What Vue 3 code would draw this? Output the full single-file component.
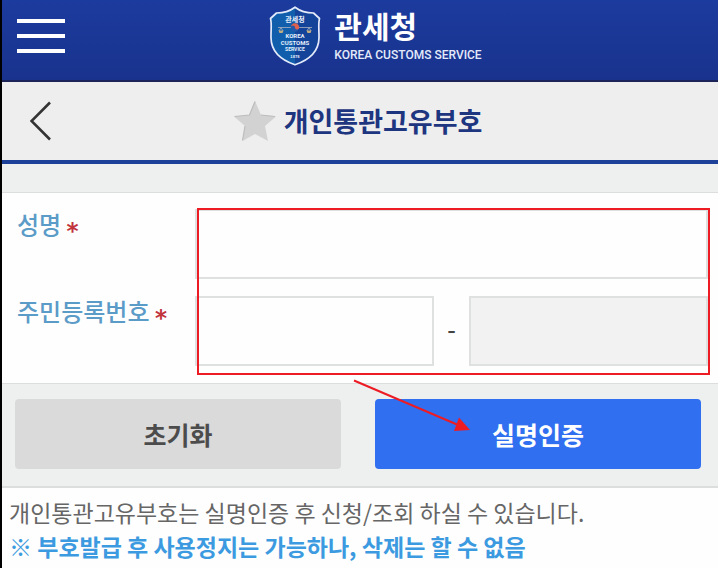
<script setup>
import { ref } from 'vue'

const name = ref('')
const idFront = ref('')
const idBack = ref('')

function reset() {
  name.value = ''
  idFront.value = ''
  idBack.value = ''
}
</script>

<template>
  <div class="page">
    <header class="top">
      <button class="menu" type="button" aria-label="메뉴">
        <span></span><span></span><span></span>
      </button>
      <a class="brand" href="#">
        <svg class="shield" viewBox="0 0 52 60" aria-hidden="true">
          <defs>
            <clipPath id="shield-clip">
              <path d="M26 1.2C21 5 15 7 7.5 7L1.5 12.5C3 18 1.8 24 2 32C2.3 46 12 54 26 58.8C40 54 49.7 46 50 32C50.2 24 49 18 50.5 12.5L44.5 7C37 7 31 5 26 1.2Z" />
            </clipPath>
          </defs>
          <g clip-path="url(#shield-clip)">
            <rect width="26" height="60" fill="#115fac" />
            <rect x="26" width="26" height="60" fill="#14439a" />
          </g>
          <path d="M26 1.2C21 5 15 7 7.5 7L1.5 12.5C3 18 1.8 24 2 32C2.3 46 12 54 26 58.8C40 54 49.7 46 50 32C50.2 24 49 18 50.5 12.5L44.5 7C37 7 31 5 26 1.2Z" fill="none" stroke="#e3ebfa" stroke-width="1.7" stroke-linejoin="round" />
          <text x="26" y="15.5" class="crest-ko">관세청</text>
          <path d="M9 21.5H43M12 21.5L10 25M12 21.5L14 25M40 21.5L38 25M40 21.5L42 25" stroke="#9aa6ba" stroke-width="0.9" fill="none" />
          <path d="M9.5 24.5H14.5L13.5 27H10.5ZM37.5 24.5H42.5L41.5 27H38.5Z" fill="#c3ae82" />
          <circle cx="26" cy="21.5" r="4.2" fill="#2358a8" />
          <path d="M21.8 21.5A4.2 4.2 0 0 1 30.2 21.5A2.1 2.1 0 0 1 26 21.5A2.1 2.1 0 0 0 21.8 21.5Z" fill="#e0604c" />
          <text x="26" y="31.5" class="crest-en">KOREA</text>
          <text x="26" y="38.5" class="crest-en">CUSTOMS</text>
          <text x="26" y="45" class="crest-en small">SERVICE</text>
          <text x="26" y="52" class="crest-year">1878</text>
        </svg>
        <span class="names">
          <span class="ko">관세청</span>
          <span class="en">KOREA CUSTOMS SERVICE</span>
        </span>
      </a>
    </header>

    <div class="titlebar">
      <button class="back" type="button" aria-label="뒤로">
        <svg viewBox="0 0 22 40" aria-hidden="true">
          <path d="M20 1.5L1.5 20L20 38.5" fill="none" stroke="#333" stroke-width="2.6" />
        </svg>
      </button>
      <h1>
        <svg class="star" viewBox="0 0 42 40" aria-hidden="true">
          <path d="M21 0L27 14L42 15.5L31 25L34 40L21 33L8.500 40L11 25L0 15.500L15.500 14Z" fill="#d2d2d2" />
          <path d="M8.500 39.500L11 25M0.500 15.500L15.500 14L21 0.500M27 14L41 15.500" fill="none" stroke="#bcbcbc" stroke-width="1.200" />
        </svg>
        <span>개인통관고유부호</span>
      </h1>
    </div>

    <form @submit.prevent>
      <div class="fields">
        <label for="name">성명 <span class="req">*</span></label>
        <input id="name" v-model="name" type="text" />
        <label for="id-front">주민등록번호 <span class="req">*</span></label>
        <div class="pair">
          <input id="id-front" v-model="idFront" type="text" />
          <span class="dash">-</span>
          <input v-model="idBack" class="masked" type="password" aria-label="주민등록번호 뒷자리" />
        </div>
        <div class="highlight">
          <svg class="arrow" viewBox="0 0 118 54" aria-hidden="true">
            <path d="M1 1.5L104 45.5" stroke="#ed1c24" stroke-width="2" />
            <path d="M117 51L101 52L106 38.5Z" fill="#ed1c24" />
          </svg>
        </div>
      </div>
      <div class="actions">
        <button class="reset" type="button" @click="reset">초기화</button>
        <button class="verify" type="submit">실명인증</button>
      </div>
    </form>

    <div class="notes">
      <p>개인통관고유부호는 실명인증 후 신청/조회 하실 수 있습니다.</p>
      <p class="warn">※ 부호발급 후 사용정지는 가능하나, 삭제는 할 수 없음</p>
    </div>
  </div>
</template>

<style>
body {
  margin: 0;
}
</style>

<style scoped>
.page {
  box-sizing: border-box;
  min-height: 100vh;
  overflow: hidden;
  border-left: 2px solid #000;
  background: #fefefe;
  font-family: "Noto Sans CJK KR", sans-serif;
}
button,
input {
  box-sizing: border-box;
  margin: 0;
  padding: 0;
  font-family: inherit;
}
button {
  border: 0;
  background: none;
  cursor: pointer;
}
.top {
  box-sizing: border-box;
  height: 82px;
  display: grid;
  grid-template-columns: 48px 1fr;
  padding: 0 32px 0 15px;
  border-bottom: 2px solid #1c2357;
  background: linear-gradient(#1c3b9e, #19338d);
}
.menu {
  display: flex;
  flex-direction: column;
  gap: 11px;
  padding-top: 19px;
}
.menu span {
  width: 48px;
  height: 4px;
  background: #fff;
}
.brand {
  display: flex;
  justify-content: center;
  align-items: flex-start;
  gap: 13px;
  padding-top: 6px;
  color: #fff;
  text-decoration: none;
}
.shield {
  width: 52px;
  height: 60px;
}
.shield text {
  text-anchor: middle;
  fill: #e6effc;
  font-weight: 700;
}
.crest-ko {
  font-size: 7px;
}
.crest-en {
  font-family: Roboto, sans-serif;
  font-size: 6px;
}
.crest-en.small {
  font-size: 5px;
}
.crest-year {
  font-size: 4px;
}
.names {
  display: flex;
  flex-direction: column;
}
.ko {
  font-size: 30px;
  font-weight: 700;
  line-height: 38px;
}
.en {
  font-family: Roboto, sans-serif;
  font-size: 12px;
  font-weight: 500;
  line-height: 22px;
  color: #e4eafa;
}
.titlebar {
  display: grid;
  grid-template-columns: 1fr auto 1fr;
  align-items: center;
  height: 78px;
  padding-right: 4px;
  border-bottom: 4px solid #1d4199;
  background: #eee;
}
.back {
  justify-self: start;
  padding-left: 28px;
}
.back svg {
  display: block;
  width: 22px;
  height: 40px;
}
h1 {
  display: flex;
  align-items: center;
  gap: 8px;
  margin: 0;
  font-size: 27px;
  font-weight: 700;
  line-height: 40px;
  color: #1e3580;
}
.star {
  width: 42px;
  height: 40px;
}
form {
  padding-top: 28px;
  background: #eef0f0;
}
.fields {
  position: relative;
  display: grid;
  grid-template-columns: 162px 1fr;
  column-gap: 16px;
  row-gap: 17px;
  padding: 16px 10px 17px 15px;
  border-top: 1px solid #dcdede;
  border-bottom: 1px solid #dcdede;
  background: #fefefe;
}
label {
  font-size: 24px;
  font-weight: 500;
  line-height: 30px;
  color: #5b9bc8;
  white-space: nowrap;
}
.req {
  font-family: "DejaVu Sans", sans-serif;
  font-size: 23px;
  font-weight: 700;
  line-height: 1;
  vertical-align: -5px;
  color: #c1343c;
}
input {
  width: 100%;
  min-width: 0;
  height: 70px;
  padding: 0 12px;
  border: 2px solid #dfe1e1;
  background: #fefefe;
  font-size: 24px;
}
.pair {
  display: grid;
  grid-template-columns: 1fr 35px 1fr;
  align-items: center;
}
.dash {
  padding-bottom: 4px;
  text-align: center;
  font-size: 24px;
  font-weight: 500;
  line-height: 32px;
  color: #444;
}
.masked {
  background: #f2f2f2;
}
.highlight {
  position: absolute;
  top: 15px;
  right: 8px;
  bottom: 8px;
  left: 195px;
  border: 2px solid #ed1c24;
  pointer-events: none;
}
.arrow {
  position: absolute;
  top: 100%;
  left: 154px;
  width: 118px;
  height: 54px;
  margin-top: 6px;
}
.actions {
  display: grid;
  grid-template-columns: 1fr 1fr;
  gap: 34px;
  padding: 15px 17px 17px 13px;
  border-bottom: 2px solid #dcdede;
}
.actions button {
  height: 70px;
  border-radius: 4px;
  font-size: 25px;
  font-weight: 700;
}
.actions .reset {
  background: #dadada;
  color: #4c4c4c;
}
.actions .verify {
  background: #2f6ff0;
  color: #fff;
}
.notes {
  padding: 7px 7px 4px;
}
p {
  margin: 0;
  font-size: 23px;
  line-height: 34px;
  color: #666;
}
.warn {
  font-weight: 700;
  color: #3c9ae0;
}
</style>
